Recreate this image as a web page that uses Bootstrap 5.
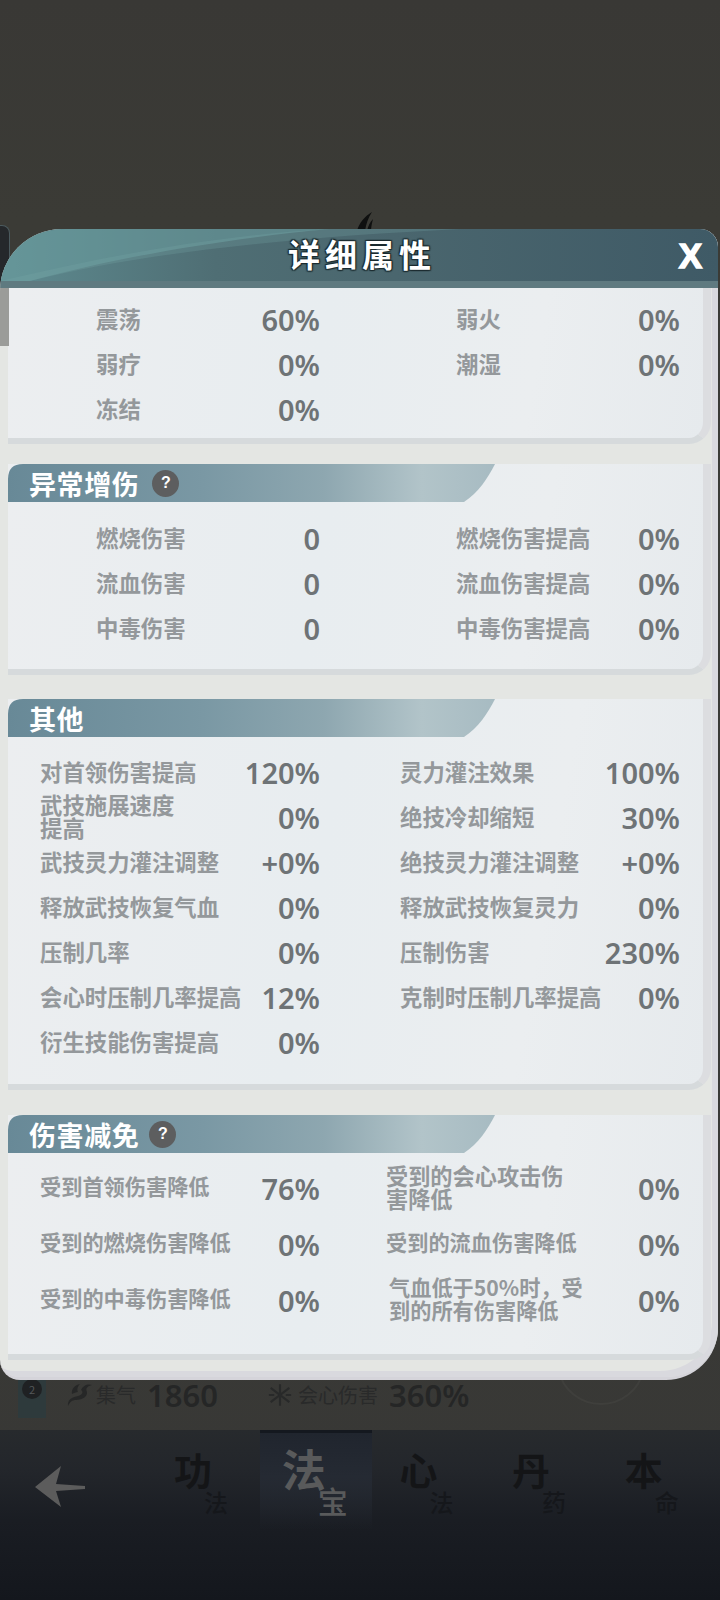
<!DOCTYPE html>
<html lang="zh">
<head>
<meta charset="utf-8">
<title>详细属性</title>
<link href="https://cdn.jsdelivr.net/npm/bootstrap@5.3.0/dist/css/bootstrap.min.css" rel="stylesheet">
<style>
html,body{margin:0;padding:0;background:#3a3936}
body{font-family:"Noto Sans CJK SC","Noto Sans",sans-serif}
.stage{width:720px;height:1600px;overflow:hidden;background:linear-gradient(#393835,#3b3b36 220px,#393936 1300px,#373735)}
.fill-space{height:1380px}
.brush{position:absolute;left:356px;top:211px;width:26px;height:20px}
.side-tab{position:absolute;left:0;top:225px;width:10px;height:125px;background:#25282b;border-radius:0 8px 8px 0;border:1px solid #4b5a5e;border-left:0}
.stats-strip{height:50px;padding-left:18px;padding-bottom:20px;color:#242525}
.badge-slab{width:28px;height:38px;background:#2e3a3c;margin-top:8px;margin-right:20px}
.badge-slab span{width:20px;height:20px;border-radius:50%;background:#1f2123;color:#55585a;font-size:11px;margin:0 auto;position:relative;top:-1px}
.strip-icon{width:27px;height:26px;flex:none}
.strip-label{font-size:20px;color:#292a2a;line-height:1;margin-left:3px}
.strip-num{font-family:"Noto Sans",sans-serif;font-size:31px;font-weight:600;line-height:1;color:#252626;margin-left:11px}
.strip-second{margin-left:50px;width:24px}
.strip-label-wide{margin-left:6px}
.ring-art{position:absolute;left:556px;top:1366px;width:90px;height:52px}
.tabbar{height:170px;background:linear-gradient(#272a2d,#23262b 40px,#1a1d23 90px,#14171d)}
.back-arrow{width:112px;padding-left:35px;padding-top:36px;flex:none}
.tabbar-tabs{margin-left:35px}
.tab-cell{width:112.7px;height:100px;position:relative;flex:none}
.tab-on{background:linear-gradient(#20252e,#252a33 45%,rgba(30,34,41,0));border-top:3px solid #14181f}
.tab-main{position:absolute;left:27px;top:20px;font-size:38px;font-weight:700;line-height:1;color:#141517}
.tab-sub{position:absolute;left:57px;top:60px;font-size:24px;font-weight:500;line-height:1;color:#15171b}
.tab-on .tab-main{color:#595a5b;top:13px;left:22px;font-size:44px}
.tab-on .tab-sub{color:#595a5b;left:58px;top:52px;font-size:30px}
.sheet{position:absolute;left:0;top:229px;width:718px;height:1151px;background:#e4e6e3;border-radius:62px 18px 52px 20px;border-bottom:3px solid #d5d4da;box-shadow:inset -6px -6px 0 #d9d9de;overflow:hidden}
.sheet-head{height:59px;position:relative;background:linear-gradient(90deg,#5e8b90,#4f6e74 30%,#4a666e 55%,#3f5a66);border-bottom:7px solid #5f7a80}
.sheet-swoosh{position:absolute;left:0;top:0;width:718px;height:52px}
.sheet-title{position:relative;font-size:32px;font-weight:700;color:#fff;letter-spacing:5px;line-height:48px;padding-left:6px;text-align:center;text-shadow:0 0 2px #1c2c30,1px 1px 1px #1c2c30,-1px 1px 1px #1c2c30,1px -1px 1px #1c2c30,-1px -1px 1px #1c2c30}
.sheet-close{position:absolute;right:16px;top:7px;font-family:"Liberation Sans",sans-serif;font-size:35px;font-weight:700;line-height:40px;color:#fff;padding:0;background:none;border:0;text-shadow:0 0 2px #1c2c30;-webkit-text-stroke:1.5px #fff}
.sheet-edge{position:absolute;left:0;top:59px;width:9px;height:58px;background:#9b9c99}
.panel-box{margin-left:8px;width:703px;background:linear-gradient(100deg,#eceef0,#e8edf0 45%,#ebeef0 75%,#e6eaed);border-right:8px solid #dcdde0;border-bottom:6px solid #d6dadc;border-bottom-right-radius:22px}
.panel-first{padding-top:9px;padding-bottom:6px}
.panel-second{margin-top:20px;padding-bottom:18px}
.panel-third{margin-top:24px;padding-bottom:19px}
.panel-fourth{margin-top:25px;padding-bottom:26px}
.sec-head{width:487px;height:38px;display:flex;align-items:center;padding-left:21px;background:linear-gradient(90deg,#688997,#7a98a4 40%,#8ea7b0 65%,#b2c4c9 85%,#a7bbc2);clip-path:path('M15 0 H487 C480 14 470 29 456 38 H0 V15 Q0 0 15 0 Z')}
.sec-title{font-size:27px;font-weight:700;color:#fff;line-height:1;letter-spacing:.6px}
.help-dot{width:27px;height:27px;border-radius:50%;background:#5d5e5f;color:#fff;font-family:"Liberation Sans",sans-serif;font-weight:700;font-size:16px;margin-left:13px}
.help-near{margin-left:10px}
.stat-grid{display:grid;grid-template-columns:352px 343px}
.stat-gap{padding-top:14px}
.stat-gap-tight{padding-top:13px}
.stat-gap-low{padding-top:7px}
.stat-cell{height:45px;display:flex;align-items:center;justify-content:space-between}
.stat-cell:nth-child(odd){padding-right:40px}
.stat-cell:nth-child(even){padding-right:23px}
.g-mid .stat-cell:nth-child(odd){padding-left:88px}
.g-mid .stat-cell:nth-child(even){padding-left:96px}
.g-wide .stat-cell:nth-child(odd){padding-left:32px}
.g-wide .stat-cell:nth-child(even){padding-left:40px}
.g-low .stat-cell:nth-child(odd){padding-left:32px}
.g-low .stat-cell:nth-child(even){padding-left:26px}
.g-low .stat-cell{height:56px}
.stat-name{font-size:22.4px;font-weight:700;line-height:22.6px;color:#94989b;white-space:nowrap;padding-bottom:3px}
.g-low .stat-name{font-size:21.2px}
.g-low .name-big{font-size:22.2px}
.name-shift{margin-left:3px}
.stat-val{font-family:"Noto Sans",sans-serif;font-size:29px;font-weight:600;line-height:1;color:#6e7376}
.sheet-foot{height:20px}
</style>
</head>
<body>
<div class="stage position-relative">
  <div class="fill-space"></div>
  <div class="side-tab"></div>
  <svg class="brush" viewBox="0 0 26 20"><path d="M1 20C3 12 9 5 16 1C12 7 10 13 9 20ZM11 20C12 15 14 11 17 8C16 12 15 16 15 20Z" fill="#0f1010"/></svg>
  <div class="stats-strip d-flex align-items-center">
    <div class="badge-slab"><span class="d-flex align-items-center justify-content-center">2</span></div>
    <svg class="strip-icon" viewBox="0 0 27 26"><path d="M2 24C1 17 7 15 12 14C16 13 18 10 15 8C18 2 23 2 26 3C22 4 19 6 21 10C22 15 15 18 10 18C6 18 4 20 2 24ZM6 12C5 7 9 3 14 2C11 5 11 8 12 10C10 10 8 11 6 12Z" fill="#262727"/></svg>
    <span class="strip-label">集气</span>
    <span class="strip-num">1860</span>
    <svg class="strip-icon strip-second" viewBox="0 0 27 26"><path d="M13.5 1V25M3 5L24 21M24 5L3 21M1 13H7M20 13H26" stroke="#282929" stroke-width="2.4" fill="none"/></svg>
    <span class="strip-label strip-label-wide">会心伤害</span>
    <span class="strip-num">360%</span>
  </div>
  <svg class="ring-art" viewBox="0 0 90 52"><path d="M3 4C6 24 25 38 45 38C65 38 84 24 87 4" stroke="#3f3f3c" stroke-width="2" fill="none"/><path d="M36 1C37 7 41 11 47 11C55 11 60 8 61 2C58 6 54 6 50 6C46 6 43 4 40 0Z" stroke="#1f2020" stroke-width="2" fill="none"/></svg>
  <nav class="tabbar d-flex">
    <div class="back-arrow">
      <svg width="50" height="42" viewBox="0 0 50 42"><path d="M26 0L0 21L26 41L21 25L50 23V20L21 18Z" fill="#5c5c5c"/></svg>
    </div>
    <div class="tabbar-tabs d-flex">
      <div class="tab-cell"><span class="tab-main">功</span><span class="tab-sub">法</span></div>
      <div class="tab-cell tab-on"><span class="tab-main">法</span><span class="tab-sub">宝</span></div>
      <div class="tab-cell"><span class="tab-main">心</span><span class="tab-sub">法</span></div>
      <div class="tab-cell"><span class="tab-main">丹</span><span class="tab-sub">药</span></div>
      <div class="tab-cell"><span class="tab-main">本</span><span class="tab-sub">命</span></div>
    </div>
  </nav>

  <section class="sheet">
    <header class="sheet-head">
      <svg class="sheet-swoosh" viewBox="0 0 718 52" preserveAspectRatio="none"><path d="M0 52V40C10 12 40 0 70 0H330C220 10 110 30 30 52Z" fill="#6b9ea1" opacity=".55"/><path d="M30 52C150 22 300 8 460 0H330C220 6 110 26 0 52Z" fill="#78a6a8" opacity=".25"/></svg>
      <div class="sheet-title">详细属性</div>
      <button class="sheet-close" type="button">X</button>
    </header>
    <div class="sheet-edge"></div>

    <div class="panel-box panel-first">
      <div class="stat-grid g-mid">
        <div class="stat-cell"><span class="stat-name">震荡</span><span class="stat-val">60%</span></div>
        <div class="stat-cell"><span class="stat-name">弱火</span><span class="stat-val">0%</span></div>
        <div class="stat-cell"><span class="stat-name">弱疗</span><span class="stat-val">0%</span></div>
        <div class="stat-cell"><span class="stat-name">潮湿</span><span class="stat-val">0%</span></div>
        <div class="stat-cell"><span class="stat-name">冻结</span><span class="stat-val">0%</span></div>
      </div>
    </div>

    <div class="panel-box panel-second">
      <div class="sec-head"><span class="sec-title">异常增伤</span><span class="help-dot d-flex align-items-center justify-content-center">?</span></div>
      <div class="stat-grid g-mid stat-gap">
        <div class="stat-cell"><span class="stat-name">燃烧伤害</span><span class="stat-val">0</span></div>
        <div class="stat-cell"><span class="stat-name">燃烧伤害提高</span><span class="stat-val">0%</span></div>
        <div class="stat-cell"><span class="stat-name">流血伤害</span><span class="stat-val">0</span></div>
        <div class="stat-cell"><span class="stat-name">流血伤害提高</span><span class="stat-val">0%</span></div>
        <div class="stat-cell"><span class="stat-name">中毒伤害</span><span class="stat-val">0</span></div>
        <div class="stat-cell"><span class="stat-name">中毒伤害提高</span><span class="stat-val">0%</span></div>
      </div>
    </div>

    <div class="panel-box panel-third">
      <div class="sec-head"><span class="sec-title">其他</span></div>
      <div class="stat-grid g-wide stat-gap-tight">
        <div class="stat-cell"><span class="stat-name">对首领伤害提高</span><span class="stat-val">120%</span></div>
        <div class="stat-cell"><span class="stat-name">灵力灌注效果</span><span class="stat-val">100%</span></div>
        <div class="stat-cell"><span class="stat-name">武技施展速度<br>提高</span><span class="stat-val">0%</span></div>
        <div class="stat-cell"><span class="stat-name">绝技冷却缩短</span><span class="stat-val">30%</span></div>
        <div class="stat-cell"><span class="stat-name">武技灵力灌注调整</span><span class="stat-val">+0%</span></div>
        <div class="stat-cell"><span class="stat-name">绝技灵力灌注调整</span><span class="stat-val">+0%</span></div>
        <div class="stat-cell"><span class="stat-name">释放武技恢复气血</span><span class="stat-val">0%</span></div>
        <div class="stat-cell"><span class="stat-name">释放武技恢复灵力</span><span class="stat-val">0%</span></div>
        <div class="stat-cell"><span class="stat-name">压制几率</span><span class="stat-val">0%</span></div>
        <div class="stat-cell"><span class="stat-name">压制伤害</span><span class="stat-val">230%</span></div>
        <div class="stat-cell"><span class="stat-name">会心时压制几率提高</span><span class="stat-val">12%</span></div>
        <div class="stat-cell"><span class="stat-name">克制时压制几率提高</span><span class="stat-val">0%</span></div>
        <div class="stat-cell"><span class="stat-name">衍生技能伤害提高</span><span class="stat-val">0%</span></div>
      </div>
    </div>

    <div class="panel-box panel-fourth">
      <div class="sec-head"><span class="sec-title">伤害减免</span><span class="help-dot help-near d-flex align-items-center justify-content-center">?</span></div>
      <div class="stat-grid g-low stat-gap-low">
        <div class="stat-cell"><span class="stat-name">受到首领伤害降低</span><span class="stat-val">76%</span></div>
        <div class="stat-cell"><span class="stat-name name-big">受到的会心攻击伤<br>害降低</span><span class="stat-val">0%</span></div>
        <div class="stat-cell"><span class="stat-name">受到的燃烧伤害降低</span><span class="stat-val">0%</span></div>
        <div class="stat-cell"><span class="stat-name">受到的流血伤害降低</span><span class="stat-val">0%</span></div>
        <div class="stat-cell"><span class="stat-name">受到的中毒伤害降低</span><span class="stat-val">0%</span></div>
        <div class="stat-cell"><span class="stat-name name-shift">气血低于50%时，受<br>到的所有伤害降低</span><span class="stat-val">0%</span></div>
      </div>
    </div>
    <div class="sheet-foot"></div>
  </section>
</div>
<script src="https://cdn.jsdelivr.net/npm/bootstrap@5.3.0/dist/js/bootstrap.bundle.min.js"></script>
</body>
</html>
